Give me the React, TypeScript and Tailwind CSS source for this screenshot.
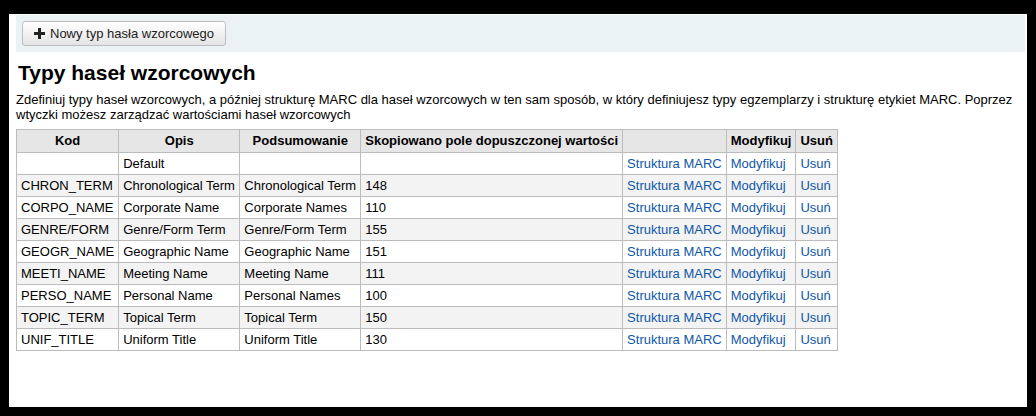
const rows = [
  ["", "Default", "", ""],
  ["CHRON_TERM", "Chronological Term", "Chronological Term", "148"],
  ["CORPO_NAME", "Corporate Name", "Corporate Names", "110"],
  ["GENRE/FORM", "Genre/Form Term", "Genre/Form Term", "155"],
  ["GEOGR_NAME", "Geographic Name", "Geographic Name", "151"],
  ["MEETI_NAME", "Meeting Name", "Meeting Name", "111"],
  ["PERSO_NAME", "Personal Name", "Personal Names", "100"],
  ["TOPIC_TERM", "Topical Term", "Topical Term", "150"],
  ["UNIF_TITLE", "Uniform Title", "Uniform Title", "130"],
];

const td = "border border-[#bcbcbc] px-[4px] py-[3px] leading-[15px] text-left whitespace-nowrap";
const th = "border border-[#bcbcbc] px-[4px] py-[3px] leading-[16px] font-bold bg-[#e6e6e6] whitespace-nowrap";
const link = "text-[#0f57a8]";

export default function App() {
  return (
    <div className="w-[1036px] h-[416px] bg-black pt-[14px] pl-[9px] pr-[9px] pb-[9px] font-['Liberation_Sans',Arial,sans-serif] text-[13px] text-black">
      <div className="bg-white h-full pt-px px-[7px]">
        <div className="bg-[#eaf2f3] h-[37px] flex items-center px-[6px] -mr-[5px]">
          <button className="h-[25px] w-[204px] flex items-center gap-[5px] px-[11px] border border-[#bdbdbd] rounded-[3px] bg-gradient-to-b from-white to-[#e4e4e4] text-[13px] text-[#222] whitespace-nowrap">
            <svg width="11" height="11" viewBox="0 0 11 11" className="shrink-0">
              <path d="M4 0h3v4h4v3H7v4H4V7H0V4h4z" fill="#222" />
            </svg>
            Nowy typ hasła wzorcowego
          </button>
        </div>
        <h1 className="text-[21px] font-bold leading-[24px] mt-[9px] ml-[2px]">Typy haseł wzorcowych</h1>
        <p className="leading-[15px] mt-[7px]">
          Zdefiniuj typy haseł wzorcowych, a później strukturę MARC dla haseł wzorcowych w ten sam sposób, w który definiujesz typy egzemplarzy i strukturę etykiet MARC. Poprzez wtyczki możesz zarządzać wartościami haseł wzorcowych
        </p>
        <table className="border-collapse w-[822px] mt-[7px]">
          <thead>
            <tr>
              <th className={`${th} w-[101px]`}>Kod</th>
              <th className={`${th} w-[123px]`}>Opis</th>
              <th className={`${th} w-[122px]`}>Podsumowanie</th>
              <th className={`${th} w-[262px] text-left`}>Skopiowano pole dopuszczonej wartości</th>
              <th className={`${th} w-[103px]`}></th>
              <th className={`${th} w-[70px]`}>Modyfikuj</th>
              <th className={`${th} w-[41px]`}>Usuń</th>
            </tr>
          </thead>
          <tbody>
            {rows.map((r, i) => (
              <tr key={i} className={i % 2 === 1 ? "bg-[#f3f3f3]" : "bg-white"}>
                <td className={td}>{r[0]}</td>
                <td className={td}>{r[1]}</td>
                <td className={td}>{r[2]}</td>
                <td className={td}>{r[3]}</td>
                <td className={`${td} ${link}`}>Struktura MARC</td>
                <td className={`${td} ${link}`}>Modyfikuj</td>
                <td className={`${td} ${link}`}>Usuń</td>
              </tr>
            ))}
          </tbody>
        </table>
      </div>
    </div>
  );
}
